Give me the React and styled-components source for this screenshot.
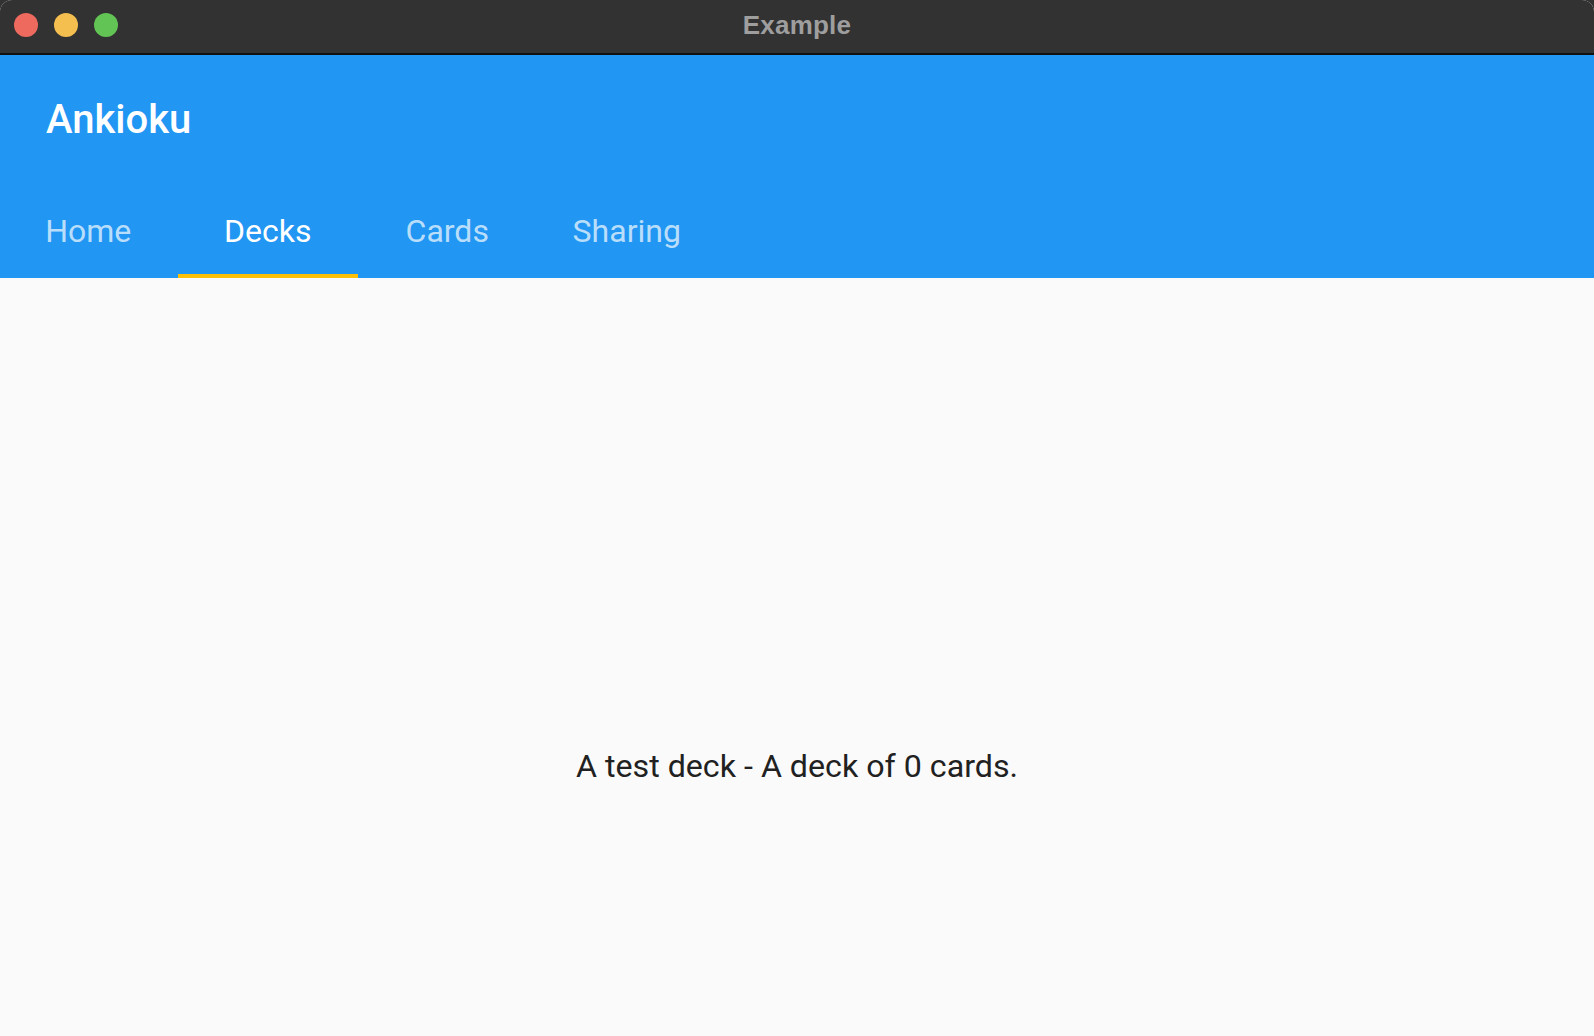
import React, { useState } from 'react';
import styled, { createGlobalStyle } from 'styled-components';

const GlobalStyle = createGlobalStyle`
  html, body {
    margin: 0;
    padding: 0;
    background: #323232;
  }
  body {
    font-family: Roboto, "Noto Sans", sans-serif;
  }
`;

const Window = styled.div`
  display: flex;
  flex-direction: column;
  width: 1594px;
  height: 1036px;
  overflow: hidden;
  border-radius: 12px 12px 0 0;
  background: #fafafa;
`;

const TitleBar = styled.div`
  position: relative;
  display: flex;
  align-items: center;
  justify-content: center;
  height: 53px;
  flex-shrink: 0;
  background: #323232;
  border-bottom: 2px solid #111111;
`;

const Lights = styled.div`
  position: absolute;
  left: 14px;
  top: 13px;
  display: flex;
  gap: 16px;
`;

const Light = styled.span`
  width: 24px;
  height: 24px;
  border-radius: 50%;
  background: ${(p) => p.color};
`;

const WindowTitle = styled.div`
  margin-top: -2px;
  font-family: "Liberation Sans", Arial, sans-serif;
  font-weight: 700;
  font-size: 26px;
  color: #9e9e9e;
  letter-spacing: 0.2px;
`;

const AppBar = styled.header`
  display: flex;
  flex-direction: column;
  flex-shrink: 0;
  background: #2196f3;
`;

const Toolbar = styled.div`
  display: flex;
  align-items: center;
  height: 126px;
  padding-top: 2px;
  box-sizing: border-box;
  padding-left: 46px;
`;

const AppTitle = styled.h1`
  margin: 0;
  font-family: Roboto, sans-serif;
  font-weight: 500;
  font-size: 40px;
  color: #ffffff;
`;

const TabBar = styled.nav`
  display: flex;
  height: 97px;
  margin-left: -1.5px;
`;

const Tab = styled.button`
  position: relative;
  display: flex;
  align-items: center;
  justify-content: center;
  width: 179.5px;
  padding: 2px 0 0;
  border: none;
  background: none;
  cursor: pointer;
  font-family: Roboto, sans-serif;
  font-size: 32px;
  color: ${(p) => (p.active ? '#ffffff' : 'rgba(255, 255, 255, 0.7)')};

  &::after {
    content: '';
    position: absolute;
    left: 0;
    right: 0;
    bottom: 0;
    height: 4px;
    background: ${(p) => (p.active ? '#ffc107' : 'transparent')};
  }
`;

const Body = styled.main`
  flex: 1;
  display: flex;
  justify-content: center;
  padding-top: 469px;
`;

const DeckText = styled.p`
  margin: 0;
  font-family: Roboto, sans-serif;
  font-size: 32.2px;
  color: #212121;
`;

const tabs = ['Home', 'Decks', 'Cards', 'Sharing'];

const App = () => {
  const [activeTab, setActiveTab] = useState(1);

  return (
    <>
      <GlobalStyle />
      <Window>
        <TitleBar>
          <Lights>
            <Light color='#ee6a5f' />
            <Light color='#f5bf4f' />
            <Light color='#61c454' />
          </Lights>
          <WindowTitle>Example</WindowTitle>
        </TitleBar>
        <AppBar>
          <Toolbar>
            <AppTitle>Ankioku</AppTitle>
          </Toolbar>
          <TabBar>
            {tabs.map((tab, index) => (
              <Tab
                key={tab}
                active={index === activeTab}
                onClick={() => setActiveTab(index)}
              >
                {tab}
              </Tab>
            ))}
          </TabBar>
        </AppBar>
        <Body>
          <DeckText>A test deck - A deck of 0 cards.</DeckText>
        </Body>
      </Window>
    </>
  );
};

export default App;
